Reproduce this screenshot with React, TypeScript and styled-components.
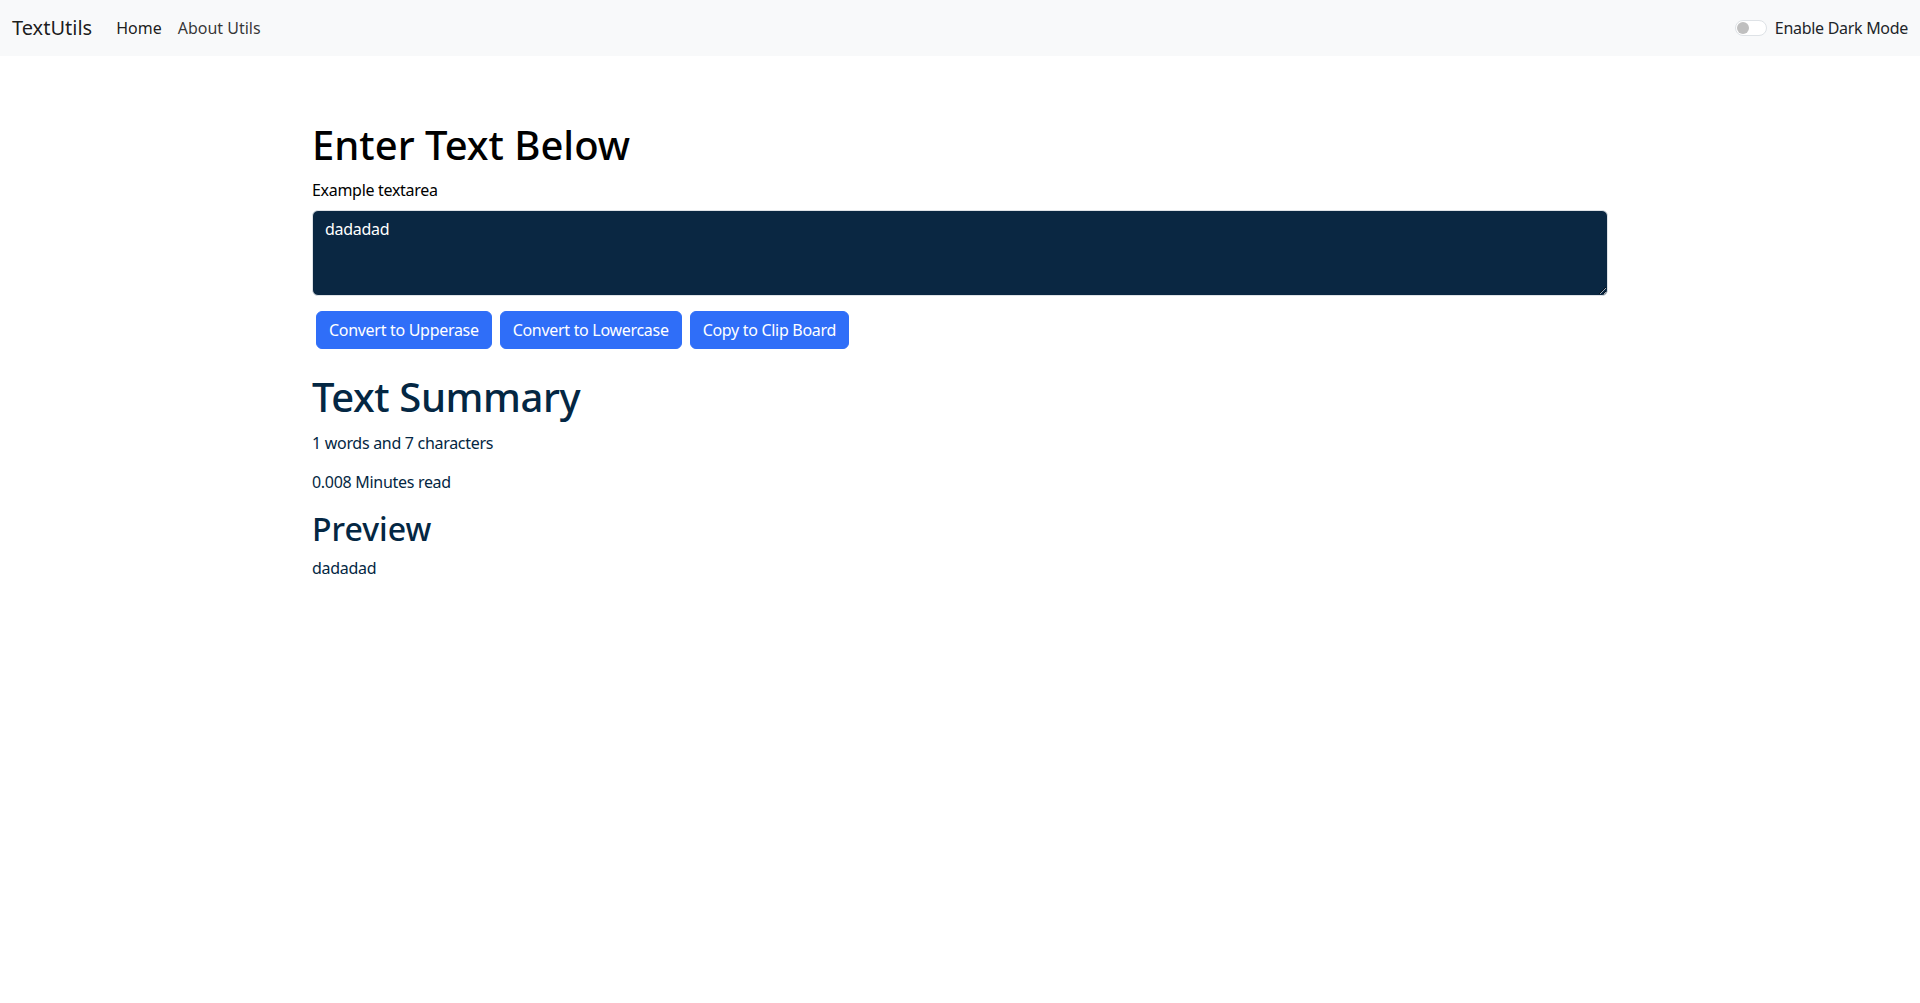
import React, { useState } from "react"
import styled, { createGlobalStyle } from "styled-components"

const GlobalStyle = createGlobalStyle`
  * {
    box-sizing: border-box;
  }
  body {
    margin: 0;
    font-family: "Noto Sans", "Open Sans", sans-serif;
    font-size: 16px;
    line-height: 1.5;
    letter-spacing: -0.3px;
    color: #212529;
    background: #fff;
  }
`

const Navbar = styled.nav`
  display: flex;
  align-items: center;
  justify-content: space-between;
  height: 56px;
  padding: 0 12px;
  background: #f8f9fa;
`

const NavLeft = styled.div`
  display: flex;
  align-items: center;
`

const Brand = styled.a`
  font-size: 20px;
  letter-spacing: 0;
  color: rgba(0, 0, 0, 0.9);
  margin-right: 16px;
  text-decoration: none;
`

const NavLink = styled.a<{ active?: boolean }>`
  padding: 8px;
  font-size: 16px;
  letter-spacing: 0;
  color: ${(props) => (props.active ? "rgba(0,0,0,0.9)" : "rgba(0,0,0,0.8)")};
  text-decoration: none;
`

const SwitchWrap = styled.label`
  display: flex;
  align-items: center;
  gap: 8px;
  font-size: 16px;
  color: #212529;
  cursor: pointer;
`

const SwitchTrack = styled.span<{ on: boolean }>`
  position: relative;
  width: 32px;
  height: 16px;
  border-radius: 8px;
  border: 1px solid ${(props) => (props.on ? "#0d6efd" : "#dee2e6")};
  background: ${(props) => (props.on ? "#0d6efd" : "#fff")};
`

const SwitchKnob = styled.span<{ on: boolean }>`
  position: absolute;
  top: 1px;
  left: ${(props) => (props.on ? "17px" : "1px")};
  width: 12px;
  height: 12px;
  border-radius: 50%;
  background: ${(props) => (props.on ? "#fff" : "#bfbfbf")};
`

const Container = styled.main`
  width: 1320px;
  margin: 0 auto;
  padding: 65px 12px 0;
`

const Title = styled.h1<{ navy?: boolean }>`
  margin: 0 0 ${(props) => (props.navy ? "10px" : "9px")};
  font-size: 40px;
  font-weight: 500;
  line-height: 1.2;
  letter-spacing: ${(props) => (props.navy ? "-0.4px" : "0")};
  color: ${(props) => (props.navy ? "#042743" : "#000")};
`

const SubTitle = styled.h2`
  margin: 0 0 8px;
  font-size: 32px;
  font-weight: 500;
  line-height: 1.2;
  letter-spacing: 0;
  color: #042743;
`

const Label = styled.label`
  display: block;
  margin-bottom: 8px;
  font-size: 16px;
  color: #000;
`

const TextArea = styled.textarea`
  display: block;
  width: 100%;
  height: 86px;
  padding: 6px 12px;
  margin-bottom: 15px;
  font-family: inherit;
  font-size: 16px;
  line-height: 1.5;
  letter-spacing: inherit;
  color: #fff;
  background: #0a2742;
  border: 1px solid #dee2e6;
  border-radius: 6px;
  resize: vertical;
  outline: none;
`

const ButtonRow = styled.div`
  display: flex;
  gap: 8px;
  padding-left: 4px;
  margin-bottom: 24px;
`

const Button = styled.button`
  height: 38px;
  padding: 0 12px;
  font-family: inherit;
  font-size: 16px;
  letter-spacing: inherit;
  color: #fff;
  background: #2f6ef8;
  border: 1px solid #2f6ef8;
  border-radius: 6px;
  cursor: pointer;
`

const Summary = styled.section`
  color: #042743;
`

const Para = styled.p<{ tight?: boolean }>`
  margin: 0 0 ${(props) => (props.tight ? "15px" : "16px")};
  font-size: 16px;
`

export default function App() {
  const [text, setText] = useState("dadadad")
  const [dark, setDark] = useState(false)

  const words = text.split(/\s+/).filter((w) => w.length > 0).length

  return (
    <>
      <GlobalStyle />
      <Navbar>
        <NavLeft>
          <Brand href="#">TextUtils</Brand>
          <NavLink href="#" active>
            Home
          </NavLink>
          <NavLink href="#">About Utils</NavLink>
        </NavLeft>
        <SwitchWrap onClick={() => setDark(!dark)}>
          <SwitchTrack on={dark}>
            <SwitchKnob on={dark} />
          </SwitchTrack>
          Enable Dark Mode
        </SwitchWrap>
      </Navbar>
      <Container>
        <Title>Enter Text Below</Title>
        <Label htmlFor="box">Example textarea</Label>
        <TextArea
          id="box"
          value={text}
          onChange={(e) => setText(e.target.value)}
        />
        <ButtonRow>
          <Button onClick={() => setText(text.toUpperCase())}>
            Convert to Upperase
          </Button>
          <Button onClick={() => setText(text.toLowerCase())}>
            Convert to Lowercase
          </Button>
          <Button onClick={() => navigator.clipboard?.writeText(text)}>
            Copy to Clip Board
          </Button>
        </ButtonRow>
        <Summary>
          <Title navy>Text Summary</Title>
          <Para tight>
            {words} words and {text.length} characters
          </Para>
          <Para>{0.008 * words} Minutes read</Para>
          <SubTitle>Preview</SubTitle>
          <Para>{text}</Para>
        </Summary>
      </Container>
    </>
  )
}
